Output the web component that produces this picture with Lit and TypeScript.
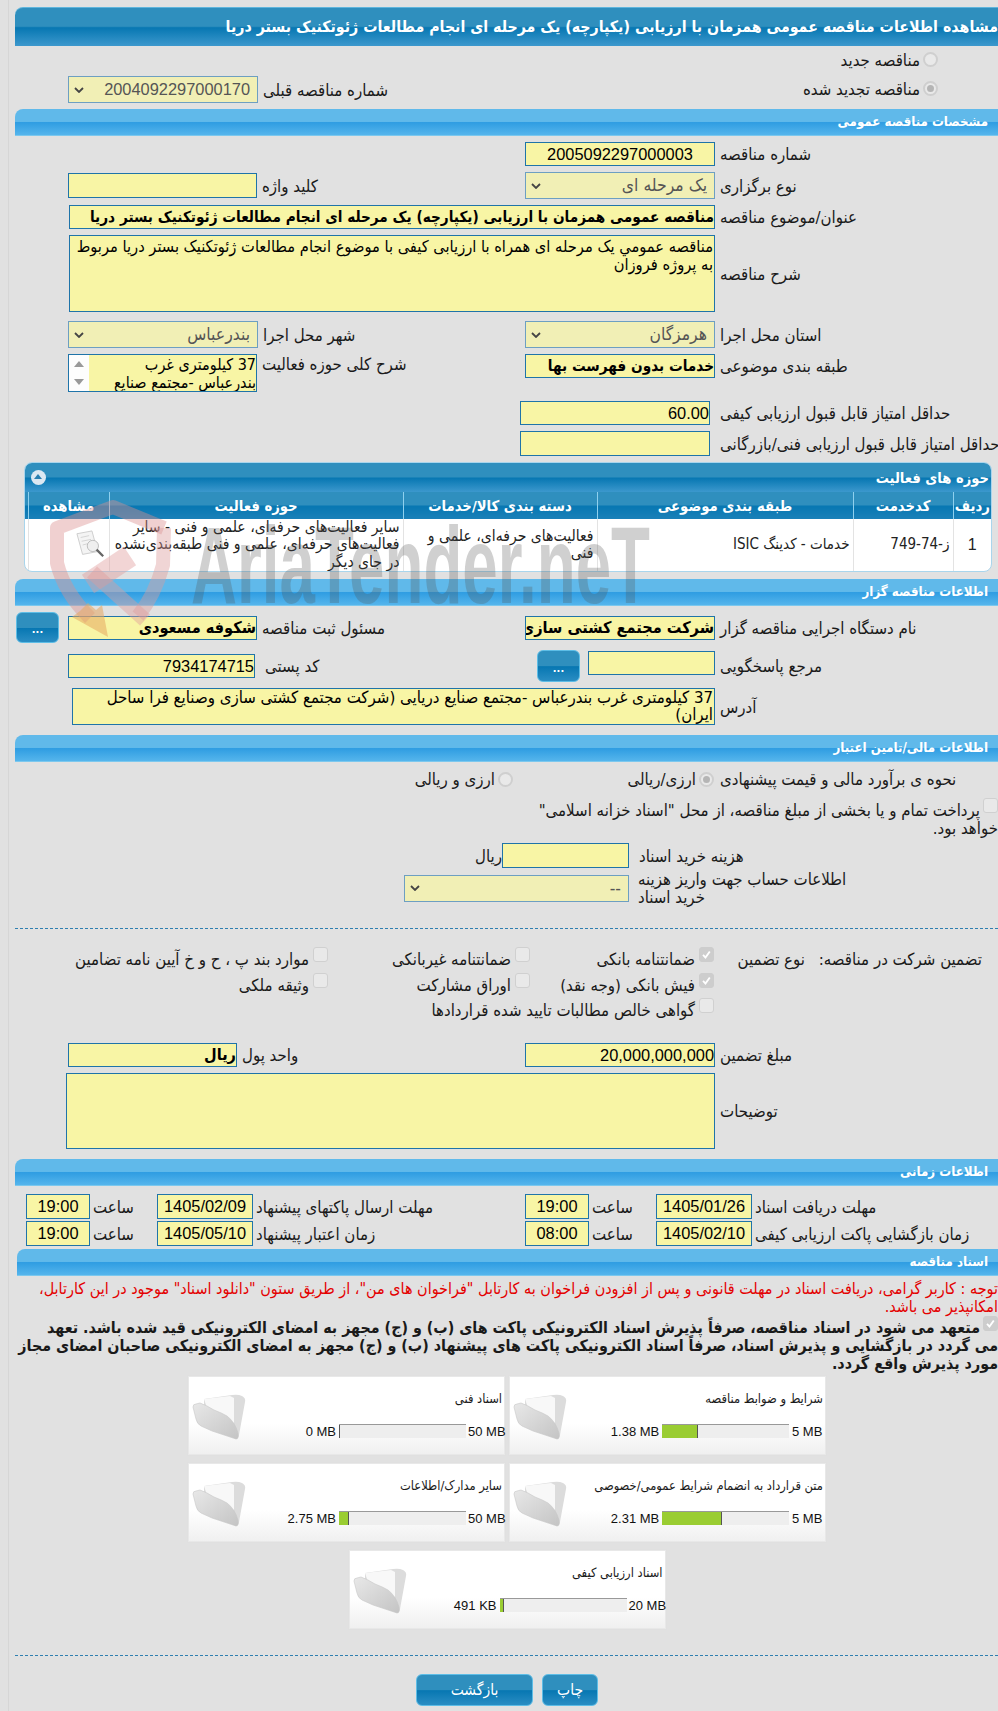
import { LitElement, html, css } from "lit";
import { customElement } from "lit/decorators.js";

const chevron = html`<svg class="chev" viewBox="0 0 10 6"><path d="M1 1l4 4 4-4" fill="none" stroke="#444" stroke-width="1.8"/></svg>`;
const check = html`<svg viewBox="0 0 15 15" class="tick"><path d="M3.5 8l2.8 3 5-7" fill="none" stroke="#fff" stroke-width="2.2"/></svg>`;

const folder = html`<svg class="folder" viewBox="0 0 54 48">
  <defs>
    <linearGradient id="fg" x1="0" y1="0" x2="1" y2="1"><stop offset="0" stop-color="#e8e8e8"/><stop offset="1" stop-color="#c4c4c4"/></linearGradient>
  </defs>
  <path d="M12 6L40 2Q46 1 50 3Q54 5 53 9L47 42Q46 46 44 46L30 40L12 20Z" fill="#dcdcdc"/>
  <path d="M12 6L38 3L42 5L42 30L18 24Z" fill="#f8f8f8"/>
  <path d="M1 14Q1 11 4 11L8 10Q14 12 22 17Q30 20 35 23Q43 29 46 40Q47 46 44 46L20 38L9 33Q5 31 4 26Z" fill="url(#fg)" stroke="#c8c8c8" stroke-width=".6"/>
</svg>`;

const card = (t: string, a: string, pct: number, b: string) => html`
  <div class="card">
    <div class="ctitle">${t}</div>
    <div class="cbody">
      ${folder}
      <div class="ccap left">${a}</div>
      <div class="prog"><div class="fill" style="width:${pct}px"></div></div>
      <div class="ccap">${b}</div>
    </div>
  </div>`;

const opt = (label: string, on: boolean) => html`<div class="gi"><span class="cb ${on ? "on" : ""}">${on ? check : ""}</span><span class="gt">${label}</span></div>`;

@customElement("app-root")
export class AppRoot extends LitElement {
  static styles = css`
    :host { display:block; width:998px; height:1711px; overflow:hidden; background:#e1e1e1; position:relative;
      font-family:"DejaVu Sans Condensed","DejaVu Sans",sans-serif; font-stretch:condensed; font-size:16.7px; color:#1a1a1a; }
    .page { margin-left:8px; border-left:1px solid #d6d6d6; height:1711px; padding-left:6px; padding-top:7px; box-sizing:border-box; }
    .head { height:39px; border-radius:8px 0 0 0; color:#fff; font-weight:bold; font-size:15.8px; line-height:37px; white-space:nowrap; overflow:hidden;
      direction:rtl; text-align:right; box-sizing:border-box; border-top:1px solid #5fb5dc;
      background:linear-gradient(#2f8fbe 0,#2f8fbe 48%,#0777b2 52%,#3c98cd 100%); }
    .bar { height:27px; border-radius:8px 0 0 0; color:#fff; font-weight:bold; font-size:13.2px; line-height:26px; direction:rtl; padding-right:10px;
      background:linear-gradient(#60b9ea 0,#60b9ea 48%,#2f9de2 52%,#55b5ec 100%); border-bottom:1px solid #7cc8ee; box-sizing:border-box; }
    .r { display:grid; grid-template-columns:510px 473px; align-items:start; }
    .h { display:flex; align-items:center; }
    .a { margin-left:53px; }
    .full { margin-left:54px; }
    .full57 { margin-left:57px; }
    .full51 { margin-left:51px; }
    .nudge { margin-left:-5px; }
    .l { direction:rtl; white-space:nowrap; margin-left:5px; text-align:right; }
    .l10 { margin-left:10px; }
    .f { direction:rtl; box-sizing:border-box; border:1px solid #1f74a9; background:#f8f5a5; white-space:nowrap; overflow:hidden; line-height:22px; height:24px; text-align:right; color:#000; flex:none; }
    .h25 { height:25px; }
    .num { font-family:"Liberation Sans",sans-serif; font-stretch:normal; font-size:16.4px; }
    .ctr { text-align:center; }
    .b { font-weight:bold; font-size:15.2px; }
    .b16 { font-size:16.2px; }
    .s { background:#f1efb5; border-color:#6d9fc2; color:#555; height:27px; display:flex; align-items:center; justify-content:space-between; padding:0 7px 0 5px; line-height:25px; font-size:17.4px; }
    .chev { width:10px; height:6px; flex:none; }
    .w190 { width:190px; } .w189 { width:189px; } .w187 { width:187px; } .w127 { width:127px; } .w169 { width:169px; } .w225 { width:225px; }
    .w646 { width:646px; } .w643 { width:643px; } .w649 { width:649px; }
    .ta { white-space:normal; line-height:18px; padding:2px 1px 0; font-size:16.3px; }
    .addr { padding-top:0; font-size:16.7px; line-height:17px; }
    .h77 { height:77px; } .h37 { height:37px; } .h76 { height:76px; }
    .t1 { margin-top:1px; } .t2 { margin-top:2px; } .t3 { margin-top:3px; } .t4 { margin-top:4px; } .t5 { margin-top:5px; } .t6 { margin-top:6px; } .t7 { margin-top:7px; } .t8 { margin-top:8px; } .t9 { margin-top:9px; } .t10 { margin-top:10px; } .t12 { margin-top:12px; } .t18 { margin-top:18px; } .t19h { margin-top:19.5px; } .t26 { margin-top:26px; } .t27 { margin-top:27px; }
    .top { align-items:flex-start; }
    .lb { display:flex; height:38px; line-height:18px; }
    .sb { width:20px; flex:none; background:#fdfdfd; display:flex; flex-direction:column; justify-content:space-between; align-items:center; padding:6px 0; box-sizing:border-box; }
    .tri { width:0; height:0; border-left:5px solid transparent; border-right:5px solid transparent; }
    .up { border-bottom:6px solid #999; } .dn { border-top:6px solid #999; }
    .lbt { flex:1; overflow:hidden; white-space:nowrap; text-align:right; font-size:16px; padding-top:1px; }
    .radio { width:15px; height:15px; border-radius:50%; border:2px solid #cfcfcf; background:#e9e9e9; box-sizing:border-box; flex:none; position:relative; display:block; }
    .radio.on::after { content:""; position:absolute; left:2px; top:2px; width:7px; height:7px; border-radius:50%; background:#b5b5b5; }
    .cb { width:15px; height:15px; border-radius:3px; border:1px solid #d0d0d0; background:#e9e9e9; box-sizing:border-box; flex:none; display:block; }
    .cb.on { background:#cdcdcd; border-color:#cdcdcd; }
    .tick { width:13px; height:13px; display:block; }
    .rad1 { height:15px; display:flex; direction:rtl; padding-right:60px; align-items:center; gap:3px; white-space:nowrap; }
    .panel { margin-left:9px; width:968px; height:110px; border-radius:8px; overflow:hidden; background:#fff; border:1px solid #a9d5ec; box-sizing:border-box; direction:rtl; margin-top:6px; }
    .ptitle { height:29px; line-height:28px; color:#fff; font-weight:bold; font-size:14.6px; padding:0 2px 0 4px; display:flex; justify-content:space-between; align-items:center;
      background:linear-gradient(#2f8fbe 0,#2f8fbe 48%,#0777b2 52%,#3c98cd 100%); }
    .circ { width:15px; height:15px; border-radius:50%; background:#dbe8f2; position:relative; margin-left:2px; }
    .circ::after { content:""; position:absolute; left:3px; top:4px; border-left:4.5px solid transparent; border-right:4.5px solid transparent; border-bottom:5px solid #2a7fb0; }
    table { border-collapse:collapse; table-layout:fixed; width:967px; font-size:15.6px; }
    .c1 { width:38px; } .c2 { width:100px; } .c3 { width:256px; } .c4 { width:194px; } .c5 { width:294px; } .c6 { width:81px; }
    th { height:27px; padding:0; color:#fff; font-size:14.7px; font-weight:bold; border-left:1px solid #8fd0ee;
      background:linear-gradient(#2f8fbe 0,#2f8fbe 48%,#0777b2 52%,#1a80b8 100%); box-sizing:border-box; }
    td { height:52px; padding:0 3px; border-left:1px solid #e3e3e3; line-height:17.3px; text-align:right; color:#222; white-space:nowrap; overflow:hidden; }
    td.one { text-align:center; font-family:"Liberation Sans",sans-serif; font-stretch:normal; font-size:16px; }
    td.sm { font-size:15px; }
    .mag { width:32px; height:30px; display:block; margin-right:-1px; margin-left:0; }
    .btn { box-sizing:border-box; border:1px solid #5dbde6; border-radius:6px; color:#fff; display:flex; justify-content:center; padding:0; font-family:inherit;
      background:linear-gradient(#2f8fbe 0,#2f8fbe 50%,#0777b2 52%,#2a8dc3 100%); flex:none; }
    .dots { width:43px; height:31px; align-items:flex-end; padding-bottom:7px; font-weight:bold; font-size:11px; line-height:10px; }
    .btn1 { margin-left:1px; margin-right:9px; }
    .btn2 { margin-left:12px; margin-right:8px; height:32px; }
    .f-up { margin-top:-7px; }
    .rh { height:32px; }
    .rh31 { height:31px; }
    .finr { display:grid; grid-template-columns:498px 201px auto; align-items:center; height:20px; }
    .optg { display:flex; justify-content:flex-end; align-items:center; gap:3px; }
    .optg .l { margin-left:0; }
    .lbl-after { margin-left:6px; text-align:left; }
    .treasury { direction:rtl; line-height:18px; white-space:nowrap; }
    .cbf { float:right; margin-top:-3px; margin-left:3px; }
    .fee { display:flex; align-items:center; margin-left:463px; height:25px; }
    .rial { width:24px; direction:rtl; text-align:left; flex:none; }
    .acc { display:flex; align-items:center; margin-left:389px; height:26px; }
    .acclab { direction:rtl; text-align:left; line-height:18px; margin-left:9px; white-space:nowrap; }
    .dash { border-top:1px dashed #2f7fb0; }
    .g { display:grid; direction:rtl; grid-template-columns:177px 91px 184px 202px 1fr; padding-right:16px; grid-auto-rows:25.5px; }
    .gl { white-space:nowrap; line-height:18px; margin-top:3px; }
    .gi { display:flex; direction:rtl; gap:4px; white-space:nowrap; align-items:flex-start; }
    .gt { line-height:18px; margin-top:3px; }
    .dates { grid-template-columns:499px 473px; margin-left:11px; }
    .dg { display:grid; grid-template-columns:64px 67px 96px auto; align-items:center; height:25px; }
    .dg .f { height:25px; line-height:23px; text-align:center; }
    .sa { direction:rtl; padding-left:3px; text-align:left; }
    .dl { direction:rtl; white-space:nowrap; margin-left:3px; text-align:left; }
    .s17 { margin-left:2px; }
    .note { direction:rtl; color:#e40000; line-height:18px; font-size:16px; white-space:nowrap; }
    .pledge { direction:rtl; font-weight:bold; line-height:18px; font-size:15.9px; white-space:nowrap; }
    .cards { display:flex; flex-wrap:wrap; justify-content:center; gap:8px 4px; width:640px; margin-left:172px; box-sizing:border-box; direction:rtl; }
    .card { width:317px; height:79px; box-sizing:border-box; border:1px solid #e8e8e8; background:linear-gradient(#fff 0,#fff 60%,#f0f0f0 100%); direction:rtl; padding:2px; box-shadow:0 0 1px #d8d8d8; }
    .ctitle { font-size:12.8px; height:36px; line-height:40px; text-align:right; white-space:nowrap; }
    .cbody { direction:ltr; display:flex; align-items:center; position:relative; height:14px; margin-top:9px; padding-left:68px; }
    .folder { width:54px; height:48px; position:absolute; left:1px; top:-31px; }
    .ccap { font-family:"Liberation Sans",sans-serif; font-stretch:normal; font-size:13px; white-space:nowrap; width:34px; text-align:center; margin-left:2px; color:#111; }
    .ccap.left { width:85px; margin-left:0; margin-right:3px; text-align:right; }
    .prog { width:127px; height:14px; background:#eee; border-top:1px solid #999; box-sizing:border-box; flex:none; }
    .fill { height:13px; background:#9acd32; border-right:1px solid #555; box-sizing:border-box; }
    .foot { display:flex; justify-content:flex-start; gap:9px; margin-left:401px; }
    .fb { height:32px; align-items:center; font-size:15.5px; }
    .fb1 { width:117px; } .fb2 { width:56px; }
    .wm { position:absolute; left:40px; top:490px; width:640px; height:160px; pointer-events:none; }
    .wmt { font-family:"Liberation Sans",sans-serif; font-weight:bold; font-stretch:normal; font-size:110px; fill:rgba(80,80,80,.27); }
  `;

  render() {
    return html`
    <div class="page">
      <div class="head">مشاهده اطلاعات مناقصه عمومی همزمان با ارزیابی (یکپارچه) یک مرحله ای انجام مطالعات ژئوتکنیک بستر دریا</div>

      <div class="rad1 t6"><span class="radio"></span><span>مناقصه جدید</span></div>
      <div class="r t9">
        <div class="h a"><div class="f s w190"><span class="num">2004092297000170</span>${chevron}</div><span class="l">شماره مناقصه قبلی</span></div>
        <div class="rad1 t5"><span class="radio on"></span><span>مناقصه تجدید شده</span></div>
      </div>

      <div class="bar t6">مشخصات مناقصه عمومی</div>
      <div class="r t6"><div></div><div class="h"><div class="f ctr w190 num">2005092297000003</div><span class="l">شماره مناقصه</span></div></div>
      <div class="r t6">
        <div class="h a t1"><div class="f h25 w189"></div><span class="l">کلید واژه</span></div>
        <div class="h"><div class="f s w190"><span>یک مرحله ای</span>${chevron}</div><span class="l">نوع برگزاری</span></div>
      </div>
      <div class="h full t6"><div class="f b w646">مناقصه عمومی همزمان با ارزیابی (یکپارچه) یک مرحله ای انجام مطالعات ژئوتکنیک بستر دریا</div><span class="l">عنوان/موضوع مناقصه</span></div>
      <div class="h full t6"><div class="f ta h77 w646">مناقصه عمومي يک مرحله ای همراه با ارزیابی کیفی با موضوع انجام مطالعات ژئوتکنیک بستر دریا مربوط<br>به پروژه فروزان</div><span class="l">شرح مناقصه</span></div>
      <div class="r t9">
        <div class="h a"><div class="f s w190"><span>بندرعباس</span>${chevron}</div><span class="l">شهر محل اجرا</span></div>
        <div class="h"><div class="f s w190"><span>هرمزگان</span>${chevron}</div><span class="l">استان محل اجرا</span></div>
      </div>
      <div class="r t6">
        <div class="h a top"><div class="f lb w189"><div class="lbt">37 کیلومتری غرب<br>بندرعباس -مجتمع صنایع</div><div class="sb"><div class="tri up"></div><div class="tri dn"></div></div></div><span class="l">شرح کلی حوزه فعالیت</span></div>
        <div class="h"><div class="f b w190">خدمات بدون فهرست بها</div><span class="l">طبقه بندی موضوعی</span></div>
      </div>
      <div class="r t9"><div></div><div class="h nudge"><div class="f w190 num">60.00&nbsp;</div><span class="l l10">حداقل امتیاز قابل قبول ارزیابی کیفی</span></div></div>
      <div class="r t6"><div></div><div class="h nudge"><div class="f h25 w190"></div><span class="l l10">حداقل امتیاز قابل قبول ارزیابی فنی/بازرگانی</span></div></div>

      <div class="panel">
        <div class="ptitle"><span>حوزه های فعالیت</span><span class="circ"></span></div>
        <table>
          <colgroup><col class="c1"><col class="c2"><col class="c3"><col class="c4"><col class="c5"><col class="c6"><col></colgroup>
          <tr><th>ردیف</th><th>کدخدمت</th><th>طبقه بندی موضوعی</th><th>دسته بندی کالا/خدمات</th><th>حوزه فعالیت</th><th>مشاهده</th><th></th></tr>
          <tr>
            <td class="one">1</td><td class="sm">ز-74-749</td><td class="sm">خدمات - کدینگ ISIC</td>
            <td>فعالیت‌های حرفه‌ای، علمی و<br>فنی</td>
            <td>سایر فعالیت‌های حرفه‌ای، علمی و فنی - سایر<br>فعالیت‌های حرفه‌ای، علمی و فنی طبقه‌بندی‌نشده<br>در جای دیگر</td>
            <td><svg class="mag" viewBox="0 0 34 32"><path d="M2 4l16-3 6 22-16 3z" fill="#f4f4f4" stroke="#ccc"/><path d="M6 8l9-2M7 12l10-2M8 16l8-2" stroke="#d3d3d3"/><circle cx="19" cy="17" r="6" fill="#efefef" stroke="#bbb"/><path d="M23 21l7 7" stroke="#666" stroke-width="2.5"/></svg></td><td></td>
          </tr>
        </table>
      </div>

      <div class="bar t7">اطلاعات مناقصه گزار</div>
      <div class="r t6 rh31">
        <div class="h rh31"><button class="btn dots btn1">...</button><div class="f b b16 w189">شکوفه مسعودی</div><span class="l">مسئول ثبت مناقصه</span></div>
        <div class="h rh31"><div class="f b b16 w190">شرکت مجتمع کشتی سازی وصنایع فرا ساحل ایران</div><span class="l">نام دستگاه اجرایی مناقصه گزار</span></div>
      </div>
      <div class="r t7 rh">
        <div class="h a rh"><div class="f w187 num">7934174715&nbsp;</div><span class="l l10">کد پستی</span></div>
        <div class="h rh"><button class="btn dots btn2">...</button><div class="f w127 f-up"></div><span class="l">مرجع پاسخگویی</span></div>
      </div>
      <div class="h full57 t6"><div class="f ta addr h37 w643">37 کیلومتری غرب بندرعباس -مجتمع صنایع دریایی (شرکت مجتمع کشتی سازی وصنایع فرا ساحل<br>ایران)</div><span class="l">آدرس</span></div>

      <div class="bar t10">اطلاعات مالی/تامین اعتبار</div>
      <div class="finr t7">
        <div class="optg"><span class="l">ارزی و ریالی</span><span class="radio"></span></div>
        <div class="optg"><span class="l">ارزی/ریالی</span><span class="radio on"></span></div>
        <span class="l lbl-after">نحوه ی برآورد مالی و قیمت پیشنهادی</span>
      </div>
      <div class="treasury t12"><span class="cb cbf"></span>پرداخت تمام و یا بخشی از مبلغ مناقصه، از محل "اسناد خزانه اسلامی"<br>خواهد بود.</div>
      <div class="fee t6"><span class="rial">ریال</span><div class="f h25 w127"></div><span class="l l10">هزینه خرید اسناد</span></div>
      <div class="acc t7"><div class="f s w225"><span>--</span>${chevron}</div><span class="acclab">اطلاعات حساب جهت واریز هزینه<br>خرید اسناد</span></div>
      <div class="dash t27"></div>

      <div class="g t18">
        <div class="gl">تضمین شرکت در مناقصه:</div>
        <div class="gl">نوع تضمین</div>
        ${opt("ضمانتنامه بانکی", true)}
        ${opt("ضمانتنامه غیربانکی", false)}
        ${opt("موارد بند پ ، ح و خ آیین نامه تضامین", false)}
        <div></div><div></div>
        ${opt("فیش بانکی (وجه نقد)", true)}
        ${opt("اوراق مشارکت", false)}
        ${opt("وثیقه ملکی", false)}
        <div></div><div></div>
        ${opt("گواهی خالص مطالبات تایید شده قراردادها", false)}
      </div>

      <div class="r t19h">
        <div class="h a"><div class="f b b16 w169">ریال</div><span class="l">واحد پول</span></div>
        <div class="h"><div class="f w190 num">20,000,000,000</div><span class="l">مبلغ تضمین</span></div>
      </div>
      <div class="h full51 t6"><div class="f h76 w649"></div><span class="l">توضیحات</span></div>

      <div class="bar t10">اطلاعات زمانی</div>
      <div class="r dates t8">
        <div class="dg"><div class="f num">19:00</div><div class="sa">ساعت</div><div class="f num">1405/02/09</div><div class="dl">مهلت ارسال پاکتهای پیشنهاد</div></div>
        <div class="dg"><div class="f num">19:00</div><div class="sa">ساعت</div><div class="f num">1405/01/26</div><div class="dl">مهلت دریافت اسناد</div></div>
      </div>
      <div class="r dates t2">
        <div class="dg"><div class="f num">19:00</div><div class="sa">ساعت</div><div class="f num">1405/05/10</div><div class="dl">زمان اعتبار پیشنهاد</div></div>
        <div class="dg"><div class="f num">08:00</div><div class="sa">ساعت</div><div class="f num">1405/02/10</div><div class="dl">زمان بازگشایی پاکت ارزیابی کیفی</div></div>
      </div>

      <div class="bar t3 s17">اسناد مناقصه</div>
      <div class="note t4">توجه : کاربر گرامی، دریافت اسناد در مهلت قانونی و پس از افزودن فراخوان به کارتابل "فراخوان های من"، از طریق ستون "دانلود اسناد" موجود در این کارتابل،<br>امکانپذیر می باشد.</div>
      <div class="pledge t3"><span class="cb on cbf">${check}</span>متعهد می شود در اسناد مناقصه، صرفاً پذیرش اسناد الکترونیکی پاکت های (ب) و (ج) مجهز به امضای الکترونیکی قید شده باشد. تعهد<br>می گردد در بازگشایی و پذیرش اسناد، صرفاً اسناد الکترونیکی پاکت های پیشنهاد (ب) و (ج) مجهز به امضای الکترونیکی صاحبان امضای مجاز<br>مورد پذیرش واقع گردد.</div>

      <div class="cards t3">
        ${card("شرایط و ضوابط مناقصه", "1.38 MB", 36, "5 MB")}
        ${card("اسناد فنی", "0 MB", 1, "50 MB")}
        ${card("متن قرارداد به انضمام شرایط عمومی/خصوصی", "2.31 MB", 60, "5 MB")}
        ${card("سایر مدارک/اطلاعات", "2.75 MB", 10, "50 MB")}
        ${card("اسناد ارزیابی کیفی", "491 KB", 4, "20 MB")}
      </div>

      <div class="dash t26"></div>
      <div class="foot t18">
        <button class="btn fb fb1">بازگشت</button>
        <button class="btn fb fb2">چاپ</button>
      </div>
    </div>
    <svg class="wm" viewBox="0 0 640 160">
      <g fill="none" stroke-opacity=".42" stroke-linejoin="round">
        <path d="M124 38 L73 17 L17 38 L17 73 Q24 102 50 128" stroke="#dc8f8f" stroke-width="14"/>
        <path d="M124 38 L123 75 Q115 105 98 126" stroke="#dc9a9a" stroke-width="14"/>
        <path d="M48 94 L90 66" stroke="#e09a9a" stroke-width="22"/>
        <path d="M52 82 L105 130" stroke="#e09a9a" stroke-width="15"/>
      </g>
      <path d="M32 127l36 20-6-32-6 5-8-7-8 8z" fill="#e6a860" fill-opacity=".55"/>
      <text class="wmt" x="151" y="113" textLength="459" lengthAdjust="spacingAndGlyphs">AriaTender.neT</text>
    </svg>`;
  }
}
